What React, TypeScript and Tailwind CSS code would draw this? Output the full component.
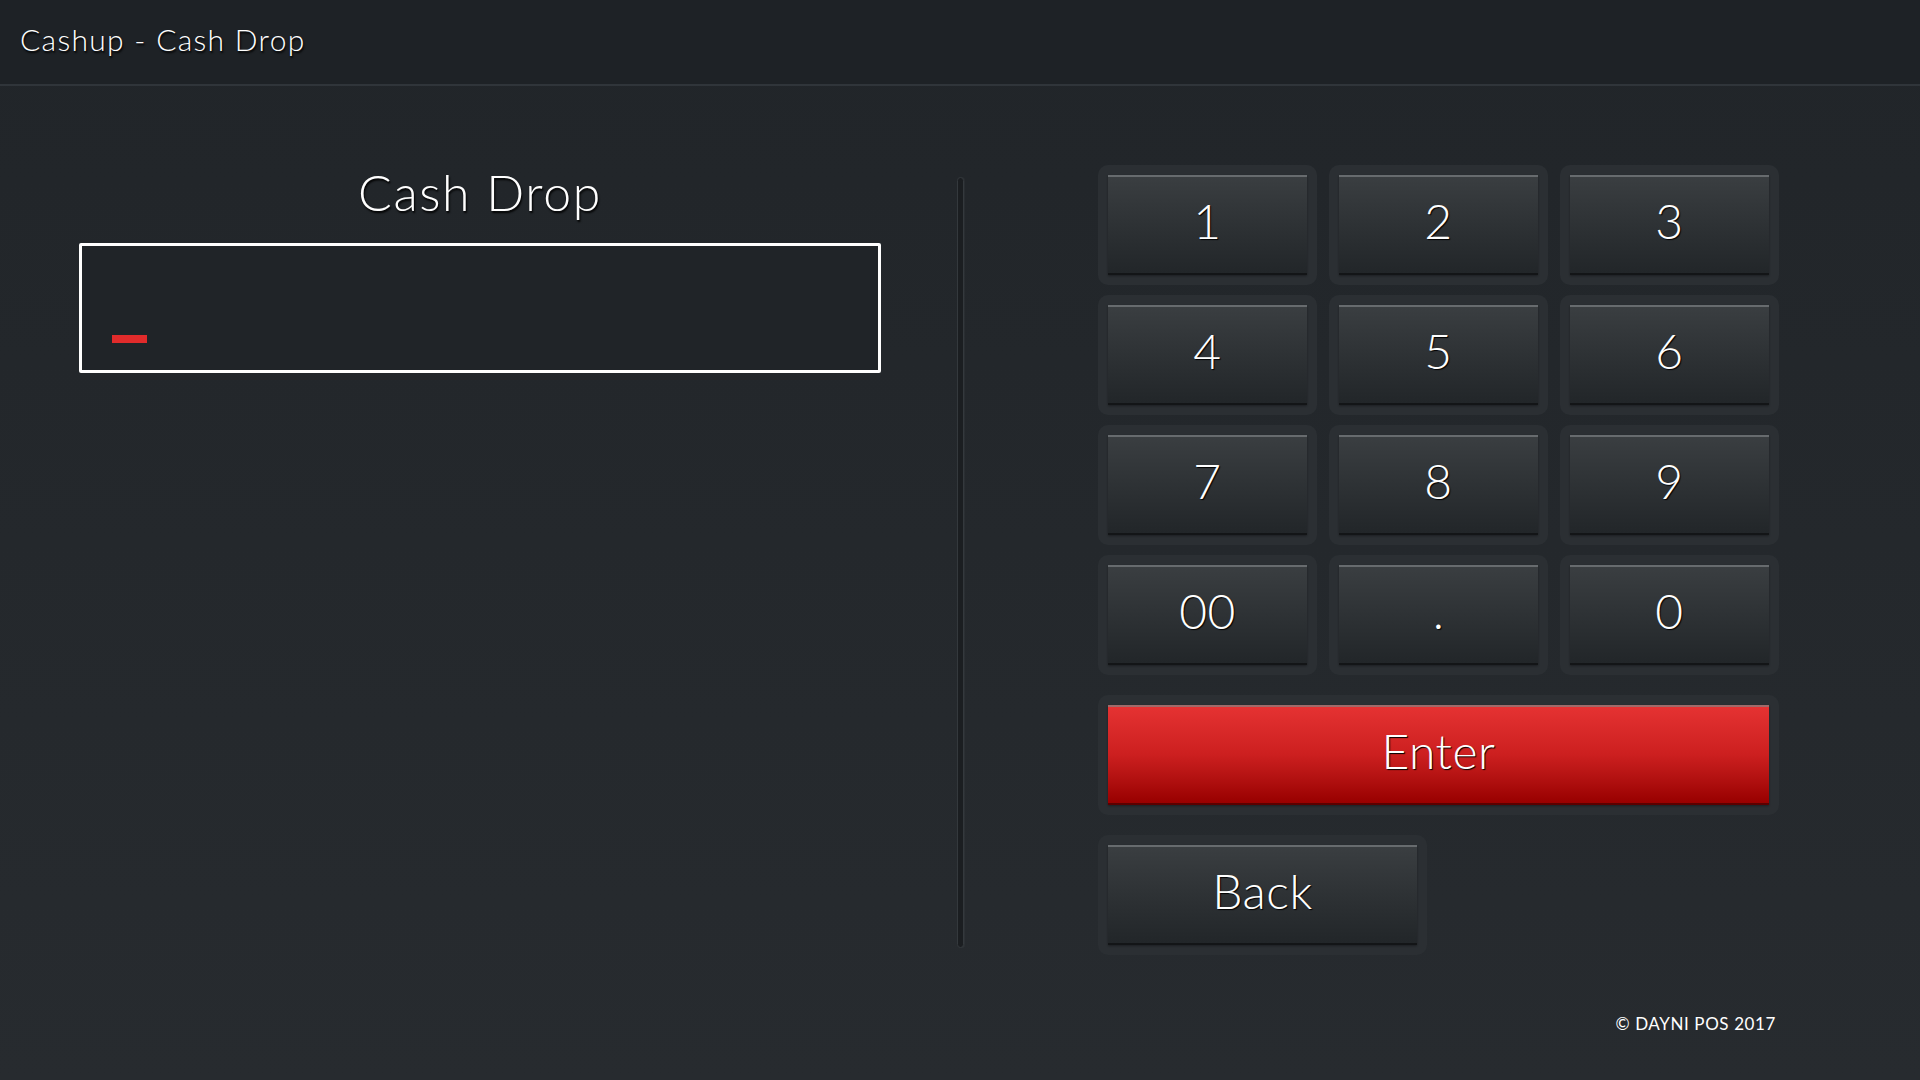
import React, { useState } from "react";

const keys = ["1", "2", "3", "4", "5", "6", "7", "8", "9", "00", ".", "0"];

interface PadButtonProps {
  label: string;
  onPress: (label: string) => void;
  variant?: "dark" | "red";
  className?: string;
}

const PadButton: React.FC<PadButtonProps> = ({
  label,
  onPress,
  variant = "dark",
  className = "",
}) => {
  const face =
    variant === "red"
      ? "bg-gradient-to-b from-[#e53232] via-[#cc1f1f] to-[#980000] border-t-2 border-t-[#a06a6a] border-b-2 border-b-[#5a0000]"
      : "bg-gradient-to-b from-[#3a3e41] to-[#222629] border-t-2 border-t-[#676b6e] border-b-2 border-b-[#131517]";

  return (
    <div className={`rounded-[10px] bg-[#2b2f33] p-[10px] ${className}`}>
      <button
        onClick={() => onPress(label)}
        className={`flex h-[100px] w-full items-center justify-center pb-[8px] text-[48px] font-light leading-none tracking-[0.5px] text-white [text-shadow:1px_1px_1px_#000] shadow-[0_1px_2px_rgba(0,0,0,0.35)] ${face}`}
      >
        {label}
      </button>
    </div>
  );
};

const App: React.FC = () => {
  const [value, setValue] = useState("");

  const handleKey = (k: string) => {
    if (k === "." && value.includes(".")) return;
    setValue((v) => v + k);
  };

  return (
    <div className="flex h-[1080px] w-[1920px] flex-col overflow-hidden bg-gradient-to-b from-[#212529] to-[#272b2f] font-['Lato','Open_Sans',sans-serif] text-white">
      {/* Header */}
      <header className="flex h-[86px] shrink-0 items-center border-b-2 border-[#30353a] bg-[#1e2226] px-5 pb-[6px]">
        <h1 className="text-[30px] font-light tracking-[1.3px] [text-shadow:1px_2px_2px_#000]">
          Cashup - Cash Drop
        </h1>
      </header>

      <main className="flex flex-1 pt-[81px]">
        {/* Amount entry */}
        <section className="ml-[79px] w-[802px]">
          <h2 className="text-center text-[50px] font-light leading-none tracking-[1.6px] [text-shadow:1px_2px_2px_#000]">
            Cash Drop
          </h2>
          <div className="mt-[26px] flex h-[130px] items-end rounded-[2px] border-[3px] border-white bg-[#202428] px-[28px] pb-[26px]">
            {value ? (
              <span className="text-[48px] font-light leading-none">{value}</span>
            ) : null}
            <span className="mb-[1px] ml-[2px] block h-[8px] w-[35px] bg-[#e12b2b]" />
          </div>
        </section>

        {/* Divider */}
        <div className="ml-[76px] mt-[10px] h-[771px] w-[7px] rounded-full border border-[#34393d] bg-[#1b1e21] shadow-[1px_0_1px_rgba(255,255,255,0.04)]" />

        {/* Keypad */}
        <section className="-mt-[2px] ml-[134px] w-[681px]">
          <div className="grid grid-cols-3 gap-x-[12px] gap-y-[10px]">
            {keys.map((k) => (
              <PadButton key={k} label={k} onPress={handleKey} />
            ))}
          </div>
          <PadButton
            label="Enter"
            variant="red"
            onPress={() => setValue("")}
            className="mt-[20px]"
          />
          <PadButton
            label="Back"
            onPress={() => setValue((v) => v.slice(0, -1))}
            className="mt-[20px] w-[329px]"
          />
          <p className="mt-[56px] pr-[3px] text-right text-[17px] tracking-[0.6px] text-white">
            © DAYNI POS 2017
          </p>
        </section>
      </main>
    </div>
  );
};

export default App;
